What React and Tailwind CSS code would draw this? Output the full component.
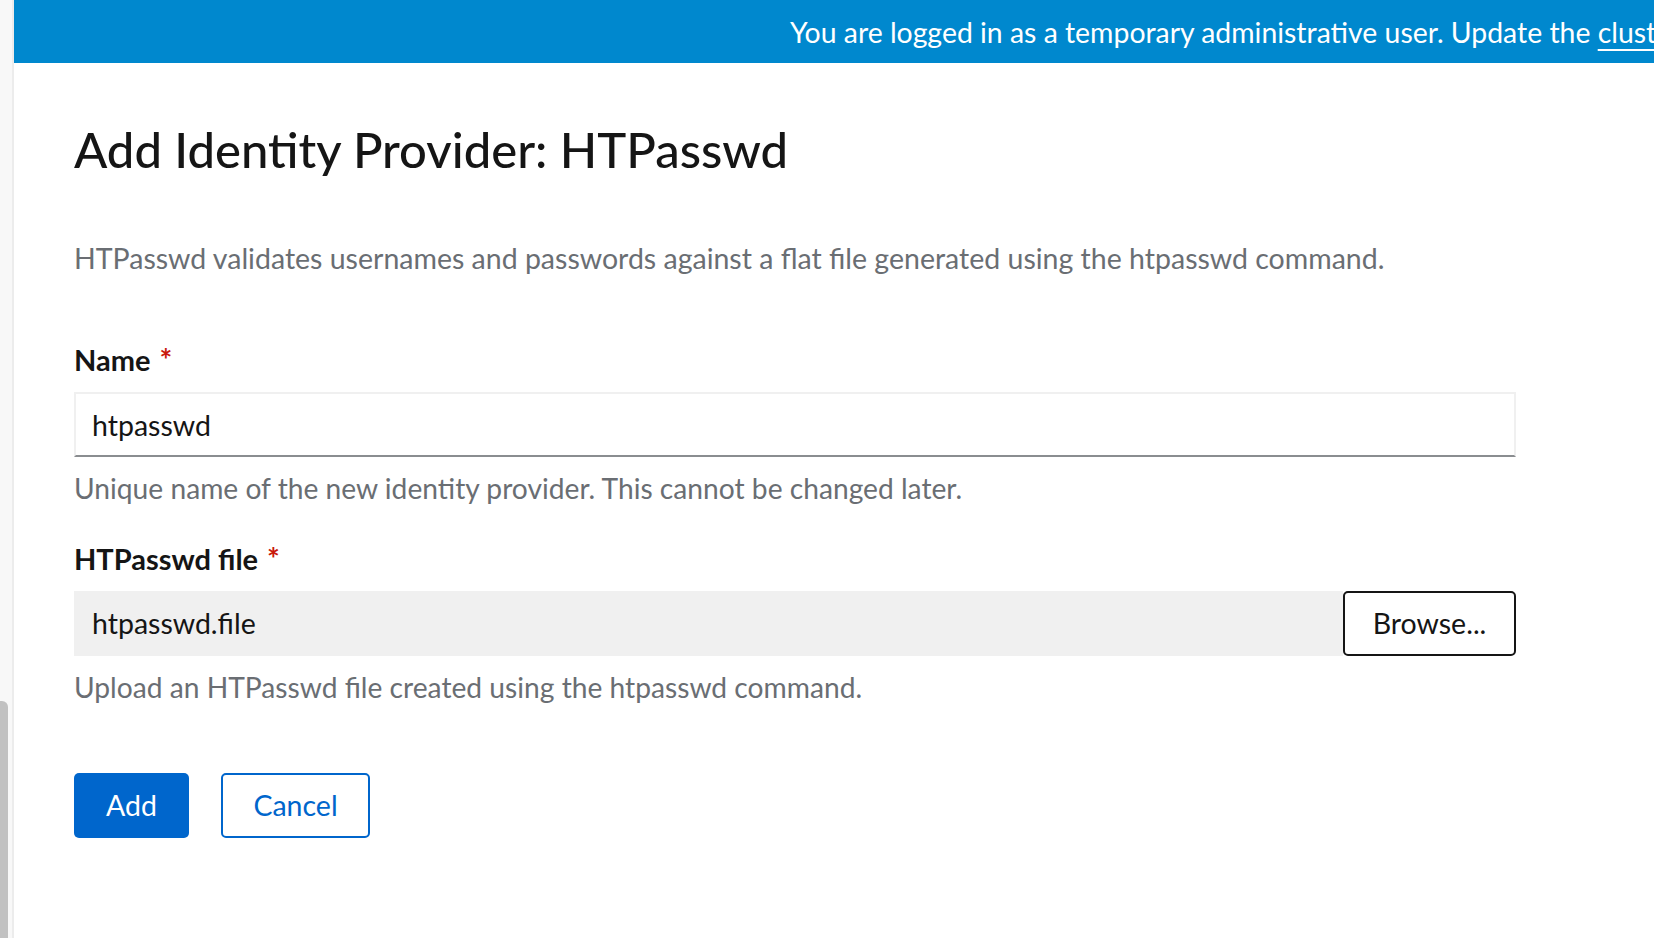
import React, { useState } from 'react';

const font = { fontFamily: 'Lato, "Open Sans", sans-serif' };

const Field = ({ label, helper, children }) => (
    <div className="flex flex-col">
        <label className="flex items-baseline text-[29px] leading-[34px] font-bold text-[#151515]">
            {label}
            <span className="ml-[9px] text-[30px] text-[#c9190b]">*</span>
        </label>
        <div className="mt-[15px]">{children}</div>
        <p className="mt-[14px] text-[28.2px] leading-[34px] text-[#6a6e73]">{helper}</p>
    </div>
);

const App = () => {
    const [name, setName] = useState('htpasswd');

    return (
        <div className="flex h-[938px] w-[1654px] overflow-hidden bg-white" style={font}>
            {/* page scrollbar strip */}
            <div className="flex w-[14px] shrink-0 flex-col justify-end border-r-2 border-[#ececec] bg-[#f8f8f8]">
                <div className="h-[237px] w-[8px] rounded-tr-[6px] bg-[#c1c1c1]" />
            </div>

            <div className="flex min-w-0 flex-1 flex-col">
                {/* info banner */}
                <div className="flex h-[63px] shrink-0 items-center overflow-hidden whitespace-nowrap bg-[#0088ce] pl-[776px] text-[28.4px] leading-[34px] text-white">
                    You are logged in as a temporary administrative user. Update the&nbsp;
                    <a href="#" className="underline decoration-2 underline-offset-[6px]">cluster OAuth configuration</a>
                    &nbsp;to allow others to log in.
                </div>

                <div className="flex flex-col px-[60px]">
                    <h1 className="mt-[57px] text-[49px] leading-[58px] font-medium text-[#151515]">
                        Add Identity Provider: HTPasswd
                    </h1>

                    <p className="mt-[63px] text-[28.5px] leading-[34px] text-[#6a6e73]">
                        HTPasswd validates usernames and passwords against a flat file generated using the htpasswd command.
                    </p>

                    <div className="mt-[67px] flex w-[1442px] flex-col gap-[36px]">
                        <Field label="Name" helper="Unique name of the new identity provider. This cannot be changed later.">
                            <input
                                type="text"
                                value={name}
                                onChange={(e) => setName(e.target.value)}
                                className="h-[65px] w-full border-2 border-[#f0f0f0] border-b-[#8a8d90] bg-white px-[16px] text-[28.5px] text-[#151515] outline-none"
                            />
                        </Field>

                        <Field label="HTPasswd file" helper="Upload an HTPasswd file created using the htpasswd command.">
                            <div className="flex h-[65px]">
                                <div className="flex flex-1 items-center bg-[#f0f0f0] px-[18px] text-[28.5px] text-[#151515]">
                                    htpasswd.file
                                </div>
                                <button className="w-[173px] rounded-[5px] border-2 border-[#151515] bg-white text-[28.5px] text-[#151515]">
                                    Browse...
                                </button>
                            </div>
                        </Field>
                    </div>

                    <div className="mt-[69px] flex gap-[32px]">
                        <button className="h-[65px] w-[115px] rounded-[5px] bg-[#0066cc] text-[28.5px] text-white">Add</button>
                        <button className="h-[65px] w-[149px] rounded-[5px] border-2 border-[#0066cc] bg-white text-[28.5px] text-[#0066cc]">
                            Cancel
                        </button>
                    </div>
                </div>
            </div>
        </div>
    );
};

export default App;
